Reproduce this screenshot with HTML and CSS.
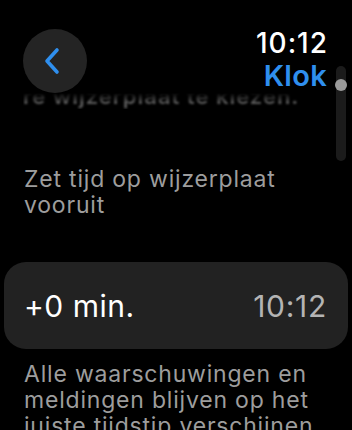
FILE: index.html
```html
<!DOCTYPE html>
<html lang="nl">
<head>
<meta charset="utf-8">
<link rel="stylesheet" href="styles.css">
</head>
<body>
<div class="screen">
  <div class="header">
    <div class="back">
      <svg width="20" height="28" viewBox="0 0 20 28"><path d="M14 3 L4 14 L14 25" fill="none" stroke="#2f8fee" stroke-width="3.6" stroke-linecap="round" stroke-linejoin="round"/></svg>
    </div>
    <div class="titles">
      <div class="time">10:12</div>
      <div class="app">Klok</div>
    </div>
  </div>
  <div class="ghost"><span>re wijzerplaat te kiezen.</span></div>
  <p class="note first">Zet tijd op wijzerplaat vooruit</p>
  <div class="card">
    <span class="offset">+0 min.</span>
    <span class="value">10:12</span>
  </div>
  <p class="note last">Alle waarschuwingen en meldingen blijven op het juiste tijdstip verschijnen.</p>
  <div class="scroll"><div class="thumb"></div></div>
</div>
</body>
</html>
```
FILE: styles.css
```css
html, body { margin: 0; padding: 0; background: #000; }
body { font-family: Inter, "Noto Sans", sans-serif; color: #fff; overflow: hidden; }
.screen { position: relative; width: 352px; height: 430px; overflow: hidden; }
.header { display: flex; justify-content: space-between; padding: 29px 25px 0 23px; }
.back { width: 64px; height: 64px; border-radius: 50%; background: #242424; display: flex; align-items: center; justify-content: center; }
.back svg { margin-left: -4px; }
.titles { text-align: right; }
.time { font-size: 28px; line-height: 32px; font-weight: 500; margin-top: -2px; letter-spacing: 1px; margin-right: -1px; }
.app { font-size: 29px; line-height: 34px; font-weight: 600; color: #2f8fee; letter-spacing: 0.3px; }
.ghost { height: 16px; overflow: hidden; margin: 0 0 0 23px; -webkit-mask-image: linear-gradient(to bottom, transparent 0, #000 60%); mask-image: linear-gradient(to bottom, transparent 0, #000 60%); }
.ghost span { display: block; white-space: nowrap; font-size: 22px; line-height: 26px; color: #5a5a5a; margin-top: -10px; filter: blur(1.3px); font-weight: 600; letter-spacing: 1px; }
.note { margin: 0; padding: 0 24px; font-size: 23px; line-height: 26px; color: #9d9d9d; letter-spacing: 0.8px; }
.note.first { margin-top: 57px; }
.card { margin: 44px 4px 0 4px; height: 87px; border-radius: 22px; background: #222; display: flex; align-items: center; justify-content: space-between; padding: 0 21px 0 20px; }
.offset { font-size: 30px; color: #fff; letter-spacing: 0.5px; }
.value { font-size: 30px; color: #b4b4b4; letter-spacing: 0.7px; }
.note.last { margin-top: 12px; }
.scroll { position: absolute; left: 336px; top: 66px; width: 10px; height: 95px; border-radius: 5px; background: #1b1b1b; }
.thumb { position: absolute; left: -1px; top: 13px; width: 12px; height: 12px; border-radius: 50%; background: #9a9a9a; }
```
